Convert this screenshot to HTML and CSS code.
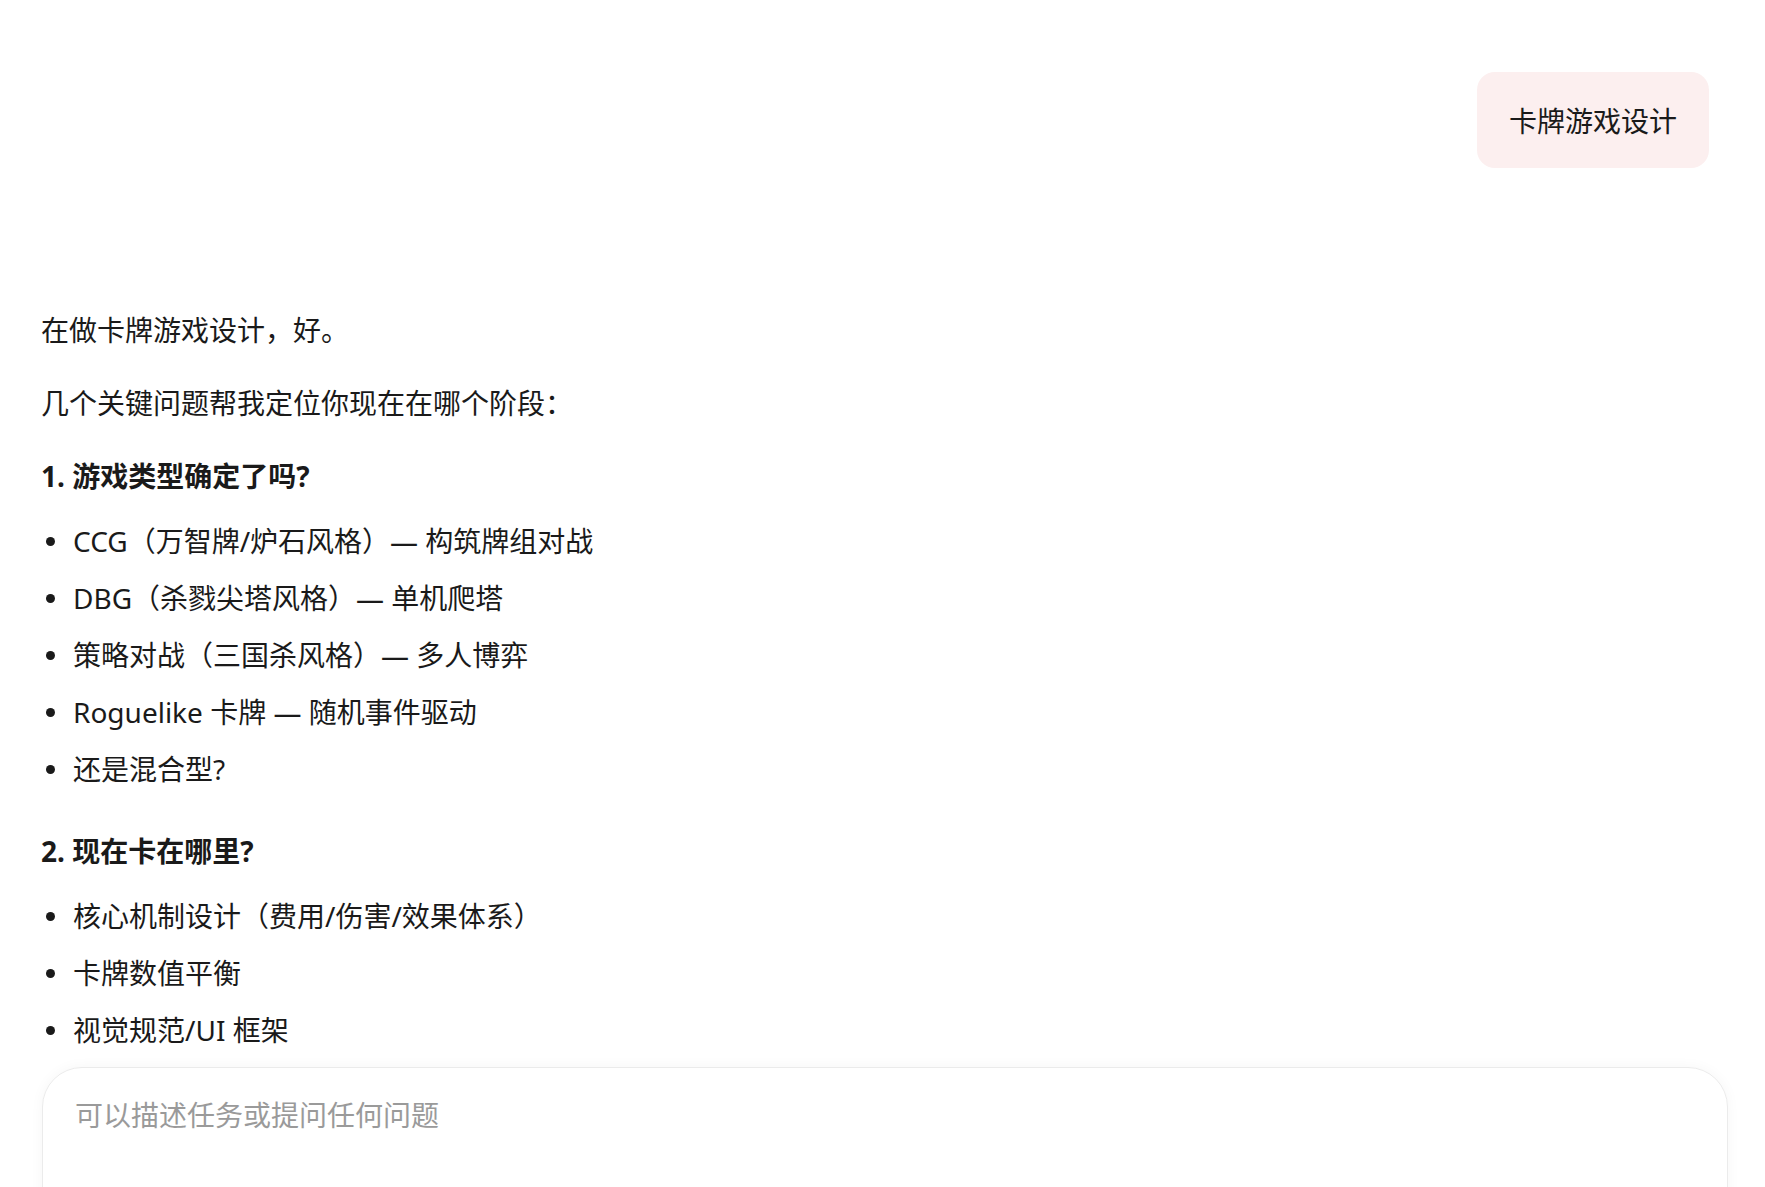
FILE: index.html
```html
<!DOCTYPE html>
<html lang="zh-CN">
<head>
    <meta charset="UTF-8">
    <meta name="viewport" content="width=device-width, initial-scale=1.0">
    <title>卡牌游戏设计</title>
    <link rel="stylesheet" href="styles.css">
</head>
<body>
    <div class="chat">
        <div class="user-row">
            <div class="user-bubble">卡牌游戏设计</div>
        </div>

        <div class="reply">
            <p>在做卡牌游戏设计，好。</p>
            <p>几个关键问题帮我定位你现在在哪个阶段：</p>

            <p class="question">1. 游戏类型确定了吗?</p>
            <ul>
                <li>CCG（万智牌/炉石风格）— 构筑牌组对战</li>
                <li>DBG（杀戮尖塔风格）— 单机爬塔</li>
                <li>策略对战（三国杀风格）— 多人博弈</li>
                <li>Roguelike 卡牌 — 随机事件驱动</li>
                <li>还是混合型?</li>
            </ul>

            <p class="question">2. 现在卡在哪里?</p>
            <ul>
                <li>核心机制设计（费用/伤害/效果体系）</li>
                <li>卡牌数值平衡</li>
                <li>视觉规范/UI 框架</li>
            </ul>
        </div>
    </div>

    <div class="composer">
        <div class="composer-input">可以描述任务或提问任何问题</div>
    </div>
</body>
</html>
```

FILE: styles.css
```css
html, body {
    height: 100%;
    overflow: hidden;
}
body {
    margin: 0;
    background: #ffffff;
    color: #1a1a1a;
    font-family: "Noto Sans", "Noto Sans CJK SC", sans-serif;
    font-size: 28px;
    line-height: 44px;
}
.chat {
    padding: 72px 56px 0 41px;
}
.user-row {
    display: flex;
    justify-content: flex-end;
}
.user-bubble {
    background: #fcefef;
    border-radius: 18px;
    padding: 27px 32px 25px;
}
.reply {
    margin-top: 140px;
}
.reply p {
    margin: 0 0 29px;
}
.reply .question {
    font-weight: bold;
    margin-bottom: 21px;
}
.reply ul {
    list-style: none;
    margin: 0 0 38px;
    padding: 0;
}
.reply ul:last-child {
    margin-bottom: 0;
}
.reply li {
    position: relative;
    padding-left: 32px;
}
.reply li + li {
    margin-top: 13px;
}
.reply li::before {
    content: "";
    position: absolute;
    left: 5px;
    top: 18px;
    width: 9px;
    height: 9px;
    border-radius: 50%;
    background: #1a1a1a;
}
.composer {
    padding: 15px 37px 0 42px;
}
.composer-input {
    height: 200px;
    border: 1px solid #ebebeb;
    border-radius: 40px;
    box-shadow: 0 0 14px rgba(0, 0, 0, 0.04);
    padding: 25px 32px;
    font-size: 28px;
    color: #9a9a9a;
}
```
